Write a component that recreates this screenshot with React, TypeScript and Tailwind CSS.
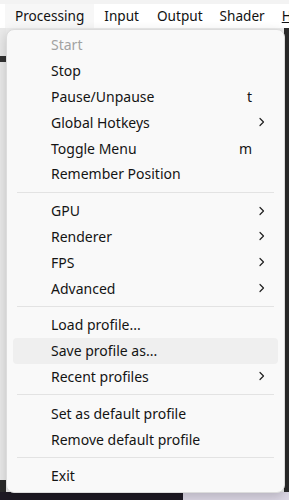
import React from "react";

type Item =
  | { sep: true }
  | { sep?: false; label: string; shortcut?: string; sub?: boolean; disabled?: boolean; hover?: boolean };

const items: Item[] = [
  { label: "Start", disabled: true },
  { label: "Stop" },
  { label: "Pause/Unpause", shortcut: "t" },
  { label: "Global Hotkeys", sub: true },
  { label: "Toggle Menu", shortcut: "m" },
  { label: "Remember Position" },
  { sep: true },
  { label: "GPU", sub: true },
  { label: "Renderer", sub: true },
  { label: "FPS", sub: true },
  { label: "Advanced", sub: true },
  { sep: true },
  { label: "Load profile..." },
  { label: "Save profile as...", hover: true },
  { label: "Recent profiles", sub: true },
  { sep: true },
  { label: "Set as default profile" },
  { label: "Remove default profile" },
  { sep: true },
  { label: "Exit" },
];

function Chevron() {
  return (
    <svg width="8" height="10" viewBox="0 0 8 10" className="block">
      <path d="M2 1.5 L5.5 5 L2 8.5" fill="none" stroke="#222" strokeWidth="1.2" strokeLinecap="round" strokeLinejoin="round" />
    </svg>
  );
}

export default function App() {
  return (
    <div
      className="relative w-[289px] h-[500px] overflow-hidden bg-[#ececec]"
      style={{ fontFamily: '"Noto Sans", "Open Sans", sans-serif' }}
    >
      {/* top strip */}
      <div className="h-[4px] bg-[#f3f3f3]" />
      {/* menu bar */}
      <div className="flex h-[24px] items-center bg-white text-[13.6px] text-[#111] pl-[5px]">
        <div className="flex h-full items-center bg-[#f7f7f7] px-[10px]">Processing</div>
        <div className="px-[10px]">Input</div>
        <div className="px-[8px]">Output</div>
        <div className="px-[9px]">Shader</div>
        <div className="underline pl-[8px]">H</div>
      </div>
      {/* background content behind */}
      <div className="absolute left-0 top-[28px] w-[6px] h-[472px] bg-[#e9e9e9]">
        <div className="absolute left-0 top-[28px] w-[6px] h-[6px] bg-[#333]" />
        <div className="absolute left-0 top-[452px] w-[6px] h-[20px] bg-[#2a2a2a]" />
      </div>
      <div className="absolute right-0 top-[28px] w-[5px] h-[472px] bg-[#2b2b2b]" />
      <div className="absolute left-0 bottom-0 w-[183px] h-[8px] bg-[#1e1a24]" />
      <div className="absolute left-[183px] bottom-0 w-[106px] h-[8px] bg-[#ddd8e6]" />

      {/* dropdown popup */}
      <div className="absolute left-[6px] top-[29px] w-[279px] rounded-[8px] border border-[#dcdcdc] bg-[#f9f9f9] pt-[2px] pb-[3px] shadow-[0_4px_12px_rgba(0,0,0,0.18)] text-[14px]">
        {items.map((it, i) =>
          it.sep ? (
            <div key={i} className="flex h-[11px] items-center px-[10px]">
              <div className="h-px w-full bg-[#e3e3e3]" />
            </div>
          ) : (
            <div
              key={i}
              className={`mx-[6px] flex h-[25.8px] items-center rounded-[4px] pl-[38px] pr-[12px] ${
                it.hover ? "bg-[#efefef]" : ""
              } ${it.disabled ? "text-[#a2a2a2]" : "text-[#141414]"}`}
            >
              <span className="flex-1">{it.label}</span>
              {it.shortcut && <span className="mr-[14px]">{it.shortcut}</span>}
              {it.sub && <Chevron />}
            </div>
          )
        )}
      </div>
    </div>
  );
}
